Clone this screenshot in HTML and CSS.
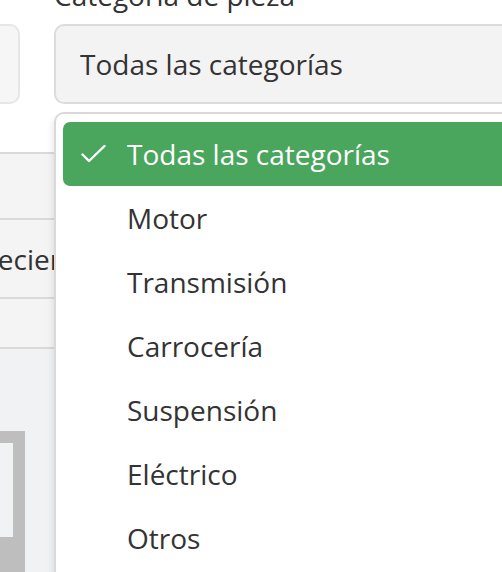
FILE: index.html
```html
<!DOCTYPE html>
<html lang="es">
<head>
<meta charset="utf-8">
<title>Filtros</title>
<link rel="stylesheet" href="styles.css">
</head>
<body>
<div class="page">
  <section class="filters">
    <div class="field">
      <label class="label">Buscar pieza</label>
      <div class="input"></div>
    </div>
    <div class="field select-field">
      <label class="label">Categoría de pieza</label>
      <div class="select">Todas las categorías</div>
      <ul class="dropdown">
        <li class="option selected">
          <svg class="check" width="25" height="18" viewBox="0 0 25 18"><path d="M1.5 9.5 L8 16 L23.5 1" fill="none" stroke="#fff" stroke-width="2.4" stroke-linecap="round" stroke-linejoin="round"/></svg>
          <span>Todas las categorías</span>
        </li>
        <li class="option"><span>Motor</span></li>
        <li class="option"><span>Transmisión</span></li>
        <li class="option"><span>Carrocería</span></li>
        <li class="option"><span>Suspensión</span></li>
        <li class="option"><span>Eléctrico</span></li>
        <li class="option"><span>Otros</span></li>
      </ul>
    </div>
  </section>
  <section class="table">
    <div class="row row-head"></div>
    <div class="row row-sort"><span class="cell-text">Más recientes</span></div>
    <div class="row row-small"></div>
  </section>
  <section class="results">
    <div class="card"><div class="card-inner"></div></div>
  </section>
</div>
</body>
</html>
```

FILE: styles.css
```css
html, body {
  margin: 0;
  padding: 0;
  width: 502px;
  height: 572px;
  overflow: hidden;
  background: #ffffff;
}

body {
  font-family: "Open Sans", "Noto Sans", sans-serif;
  color: #333333;
  font-size: 28px;
}

.page {
  margin-left: -200px;
  margin-top: -24px;
  width: 1000px;
}

.filters {
  display: grid;
  grid-template-columns: 220px 560px;
  column-gap: 34px;
  padding-bottom: 48px;
}

.field {
  display: flex;
  flex-direction: column;
  gap: 10px;
}

.select-field {
  position: relative;
}

.label {
  display: block;
  font-size: 28px;
  line-height: 38px;
  color: #333333;
  white-space: nowrap;
}

.input {
  height: 76px;
  border: 2px solid #e6e6e6;
  border-radius: 10px;
  background: #f6f6f6;
}

.select {
  height: 76px;
  border: 2px solid #dcdcdc;
  border-radius: 10px;
  background: #f3f3f3;
  display: flex;
  align-items: center;
  padding-left: 24px;
  font-size: 28px;
  color: #333333;
}

.dropdown {
  position: absolute;
  top: calc(100% + 8px);
  left: 0;
  width: 540px;
  margin: 0;
  padding: 8px 7px;
  list-style: none;
  background: #ffffff;
  border: 2px solid #d9d9d9;
  border-radius: 10px;
  box-shadow: -2px 4px 6px rgba(0, 0, 0, 0.08);
  z-index: 10;
}

.option {
  height: 64px;
  display: flex;
  align-items: center;
  padding-left: 64px;
  font-size: 28px;
  color: #333333;
  border-radius: 7px;
  white-space: nowrap;
}

.option.selected {
  background: #4aa55d;
  color: #ffffff;
  padding-left: 18px;
  gap: 21px;
}

.check {
  flex: none;
}

.table {
  border-top: 2px solid #d9d9d9;
}

.row {
  background: #f4f4f4;
  border-bottom: 2px solid #d9d9d9;
  display: flex;
  align-items: center;
}

.row-head {
  height: 64px;
}

.row-sort {
  height: 77px;
}

.row-small {
  height: 48px;
}

.cell-text {
  padding-left: 125px;
  font-size: 28px;
  color: #333333;
  white-space: nowrap;
}

.results {
  background: #f1f2f4;
  padding-top: 82px;
  height: 300px;
}

.card {
  width: 213px;
  border-top: 12px solid #bebebe;
  border-right: 12px solid #bebebe;
  border-bottom: 60px solid #bebebe;
}

.card-inner {
  height: 94px;
  background: #f1f2f4;
}
```
